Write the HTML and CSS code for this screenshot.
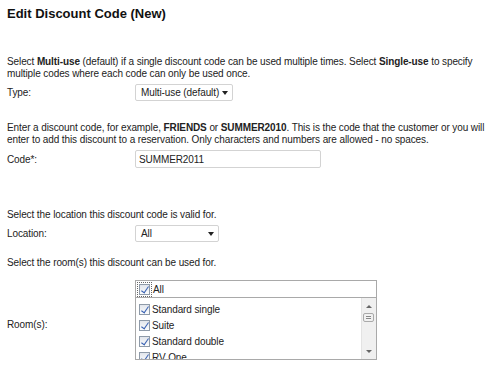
FILE: index.html
```html
<!DOCTYPE html>
<html>

<head>
  <title>Edit Discount Code</title>
  <meta charset="utf-8">
  <link rel="stylesheet" href="styles.css">
</head>

<body>
  <h1 class="title">Edit Discount Code (New)</h1>

  <div class="section first">
    <p class="hint">Select <b>Multi-use</b> (default) if a single discount code can be used multiple times. Select <b>Single-use</b> to specify multiple codes where each code can only be used once.</p>
    <div class="row">
      <span class="label">Type:</span>
      <span class="select type-select">Multi-use (default)</span>
    </div>
  </div>

  <div class="section">
    <p class="hint">Enter a discount code, for example, <b>FRIENDS</b> or <b>SUMMER2010</b>. This is the code that the customer or you will enter to add this discount to a reservation. Only characters and numbers are allowed - no spaces.</p>
    <div class="row">
      <span class="label">Code*:</span>
      <input class="text" type="text" value="SUMMER2011">
    </div>
  </div>

  <div class="section wide">
    <p class="hint">Select the location this discount code is valid for.</p>
    <div class="row">
      <span class="label">Location:</span>
      <span class="select location-select">All</span>
    </div>
  </div>

  <div class="section tight">
    <p class="hint">Select the room(s) this discount can be used for.</p>
    <div class="row rooms">
      <span class="label">Room(s):</span>
      <div class="roombox">
        <div class="all"><span class="check focus"></span>All</div>
        <div class="list">
          <div class="items">
            <div class="item"><span class="check"></span>Standard single</div>
            <div class="item"><span class="check"></span>Suite</div>
            <div class="item"><span class="check"></span>Standard double</div>
            <div class="item"><span class="check"></span>RV One</div>
          </div>
          <div class="scroll">
            <span class="up"></span>
            <span class="thumb"></span>
            <span class="down"></span>
          </div>
        </div>
      </div>
    </div>
  </div>
</body>

</html>
```

FILE: styles.css
```css
* {
  padding: 0;
  margin: 0;
  box-sizing: border-box;
}

body {
  padding: 7px;
  width: 498px;
  font-family: "Liberation Sans", Arial, sans-serif;
  font-size: 10px;
  letter-spacing: -0.1px;
  color: #222;
  background: #fff;
}

.title {
  font-size: 13px;
  line-height: 14px;
  letter-spacing: 0;
  color: #111;
}

.section {
  margin-top: 21px;
}

.section.first {
  margin-top: 35px;
}

.section.wide {
  margin-top: 41px;
}

.section.tight {
  margin-top: 15px;
}

.hint {
  line-height: 12px;
}

.row {
  display: flex;
  align-items: center;
  margin-top: 4px;
}

.label {
  width: 128px;
  flex: none;
}

.select {
  display: inline-block;
  position: relative;
  height: 17px;
  line-height: 15px;
  padding-left: 5px;
  border: 1px solid #d3d3d3;
  border-radius: 2px;
  background: #fff;
}

.select::after {
  content: "";
  position: absolute;
  right: 4px;
  top: 6px;
  border-left: 3px solid transparent;
  border-right: 3px solid transparent;
  border-top: 4px solid #222;
}

.type-select {
  width: 98px;
}

.location-select {
  width: 84px;
}

.text {
  width: 186px;
  height: 18px;
  padding: 0 3px;
  border: 1px solid #d3d3d3;
  border-radius: 2px;
  font-family: inherit;
  font-size: 10px;
  letter-spacing: inherit;
  color: #222;
}

.rooms {
  margin-top: 11px;
}

.rooms .label {
  margin-top: 8px;
}

.roombox {
  width: 242px;
  border: 1px solid #a9a9a9;
}

.all {
  display: flex;
  align-items: center;
  height: 17px;
  padding-left: 3px;
  border-bottom: 1px solid #a9a9a9;
}

.list {
  display: flex;
  height: 61px;
  overflow: hidden;
}

.items {
  flex: 1;
  padding: 3px 0 0 3px;
}

.item {
  display: flex;
  align-items: center;
  height: 16px;
}

.check {
  display: inline-block;
  position: relative;
  width: 11px;
  height: 11px;
  margin-right: 2px;
  border: 1px solid #8e9aa8;
  background: linear-gradient(#e2e6ec, #fbfcfd);
}

.check::after {
  content: "";
  position: absolute;
  left: 3px;
  top: 0;
  width: 3px;
  height: 7px;
  border-right: 1.5px solid #3a62b3;
  border-bottom: 1.5px solid #3a62b3;
  transform: rotate(35deg);
}

.check.focus {
  outline: 1px dotted #666;
  outline-offset: 1px;
  margin-right: 3px;
}

.scroll {
  position: relative;
  width: 15px;
  background: #f0f0f0;
  border-left: 1px solid #e3e3e3;
}

.up,
.down {
  position: absolute;
  left: 4px;
  border-left: 3px solid transparent;
  border-right: 3px solid transparent;
}

.up {
  top: 7px;
  border-bottom: 3px solid #666;
}

.down {
  bottom: 6px;
  border-top: 3px solid #666;
}

.thumb {
  position: absolute;
  left: 1px;
  top: 15px;
  width: 11px;
  height: 9px;
  border: 1px solid #aaa;
  border-radius: 2px;
  background: repeating-linear-gradient(#f4f4f4 0, #f4f4f4 1px, #888 1px, #888 2px);
  background-size: 5px 5px;
  background-position: center;
  background-repeat: no-repeat;
}
```
